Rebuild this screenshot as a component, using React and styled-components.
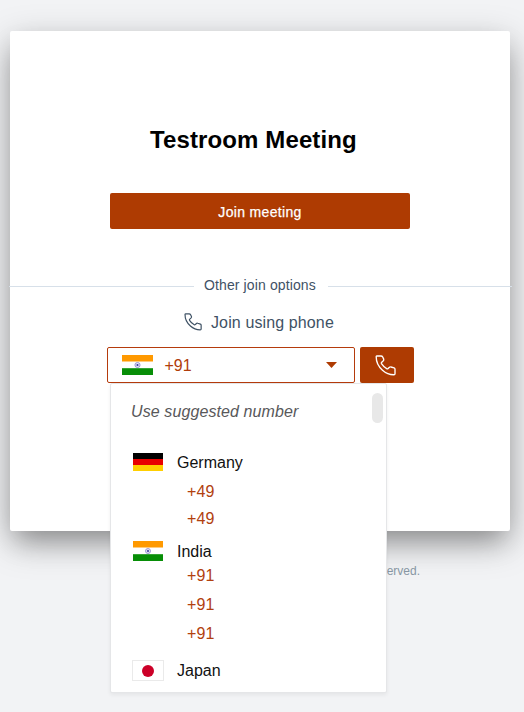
import React from "react";
import styled, { createGlobalStyle } from "styled-components";

const GlobalStyle = createGlobalStyle`
  * { box-sizing: border-box; }
  body {
    margin: 0;
    background: #f2f3f5;
    font-family: "Liberation Sans", Arial, Helvetica, sans-serif;
    overflow: hidden;
  }
`;

const Page = styled.main`
  width: 524px;
  height: 712px;
  padding: 31px 0 0 10px;
  overflow: hidden;
`;

const Card = styled.section`
  display: flex;
  flex-direction: column;
  align-items: flex-start;
  width: 500px;
  height: 500px;
  padding-top: 92px;
  background: #fff;
  border-radius: 2px;
  box-shadow: 0 11px 36px rgba(0, 0, 0, 0.25), 0 14px 26px -6px rgba(0, 0, 0, 0.28);
`;

const Title = styled.h1`
  margin: 0 0 0 140px;
  height: 34px;
  color: #000;
  font-size: 24px;
  font-weight: 700;
  line-height: 34px;
  letter-spacing: 0.12px;
  white-space: nowrap;
`;

const JoinButton = styled.button`
  width: 300px;
  height: 36px;
  margin: 36px 0 0 100px;
  padding: 1px 0 0;
  border: 0;
  border-radius: 2px;
  background: #ae3b02;
  color: #fff;
  font: 14px "Liberation Sans", Arial, sans-serif;
  letter-spacing: 0.33px;
  -webkit-text-stroke: 0.25px #fff;
`;

const Divider = styled.div`
  display: flex;
  align-items: center;
  width: 503px;
  height: 20px;
  margin: 46px 0 0 -1px;
  gap: 10px;
  color: #3f5265;
  font-size: 14px;
  letter-spacing: 0.12px;
  white-space: nowrap;
`;

const Rule = styled.span`
  flex: none;
  width: ${(p) => p.$width}px;
  height: 1px;
  margin-top: 2px;
  background: #d7e0e9;
`;

const DividerLabel = styled.span`
  flex: none;
  width: 114px;
`;

const PhoneHeading = styled.h2`
  display: flex;
  align-items: center;
  gap: 9px;
  height: 24px;
  margin: 16px 0 0 174px;
  color: #3f5265;
  font-size: 16px;
  font-weight: 400;
  letter-spacing: 0.12px;
  white-space: nowrap;
  svg { margin-top: -2px; }
`;

const DialRow = styled.div`
  position: relative;
  display: flex;
  gap: 4.5px;
  margin: 12px 0 0 97px;
`;

const Select = styled.button`
  display: flex;
  align-items: center;
  width: 248px;
  height: 36px;
  padding: 0 17px 0 14px;
  border: 1px solid #b53b0c;
  border-radius: 2px;
  background: #fff;
  color: #b03c0b;
  font: 16px "Liberation Sans", Arial, sans-serif;
`;

const SelectValue = styled.span`
  flex: 1;
  margin-left: 11.5px;
  padding-top: 1px;
  text-align: left;
`;

const CallButton = styled.button`
  display: grid;
  place-items: center;
  width: 54px;
  height: 36px;
  padding: 0 3px 0 0;
  border: 0;
  border-radius: 2px;
  background: #ae3b02;
  color: #fff;
`;

const Menu = styled.div`
  position: absolute;
  top: 36px;
  left: 3px;
  z-index: 2;
  width: 277px;
  height: 310px;
  padding: 16px 0 0 21px;
  border: 1px solid #e5e6e8;
  border-radius: 2px;
  background: #fff;
  box-shadow: 0 2px 4px rgba(0, 0, 0, 0.06);
`;

const Suggestion = styled.div`
  height: 24px;
  margin: 0 0 28px -1px;
  color: #58585a;
  font-size: 16px;
  font-style: italic;
  line-height: 24px;
  letter-spacing: 0.1px;
`;

const Country = styled.div`
  display: flex;
  align-items: center;
  height: 22px;
  margin-top: ${(p) => p.$gap || 0}px;
  color: #111;
  font-size: 16px;
`;

const FlagSlot = styled.span`
  display: flex;
  justify-content: center;
  width: 32px;
  margin: -2px 13px 0 0;
`;

const Dial = styled.div`
  height: 20px;
  margin: ${(p) => p.$gap}px 0 0 55px;
  color: #b2410f;
  font-size: 16px;
  line-height: 20px;
  letter-spacing: 0.1px;
`;

const ScrollThumb = styled.div`
  position: absolute;
  top: 9px;
  right: 3px;
  width: 11px;
  height: 30px;
  border-radius: 6px;
  background: #e8e8e8;
`;

const Footer = styled.footer`
  width: 410px;
  margin-top: 33px;
  color: #8796a3;
  font-size: 12px;
  line-height: 14px;
  text-align: right;
`;

const PhoneIcon = ({ size, weight }) => (
  <svg width={size} height={size} viewBox="0 0 21 21" fill="none" stroke="currentColor" strokeWidth={weight} strokeLinejoin="round">
    <path d="M1.2 1.7Q1.3 1 2 1H6Q7.2 1 7.7 2L8.7 4.1Q9 5 8.3 5.7L6.5 7.4Q6.1 7.9 6.5 8.6Q8.6 12 12 13.8Q12.6 14.1 13.1 13.6L14.5 12.2Q15.1 11.6 16 12L19.1 12.9Q20 13.2 20 14.2V18.7Q20 19.7 19 19.7Q12.6 19.8 7.5 15.2Q1.1 9.4 1.2 1.7Z" />
  </svg>
);

const IndiaFlag = ({ width = 30 }) => (
  <svg width={width} height="20" viewBox="0 0 30 20" preserveAspectRatio="none">
    <rect width="30" height="20" fill="#fff" />
    <rect width="30" height="6.5" fill="#ff9900" />
    <rect y="13.2" width="30" height="6.8" fill="#078e07" />
    <circle cx="15" cy="10" r="2.5" fill="#e5e4f6" stroke="#8a85cd" strokeWidth=".8" />
    <circle cx="15" cy="10" r="1" fill="#37339c" />
  </svg>
);

const GermanyFlag = () => (
  <svg width="30" height="18" viewBox="0 0 30 18">
    <rect width="30" height="6" fill="#000" />
    <rect y="6" width="30" height="6" fill="#e80000" />
    <rect y="12" width="30" height="6" fill="#ffcf00" />
  </svg>
);

const JapanFlag = () => (
  <svg width="32" height="22" viewBox="0 0 32 22">
    <rect x=".5" y="1.5" width="31" height="20" fill="#fff" stroke="#eaeaea" />
    <circle cx="16" cy="12" r="6" fill="#cc0028" />
  </svg>
);

export default function App() {
  return (
    <Page>
      <GlobalStyle />
      <Card>
        <Title>Testroom Meeting</Title>
        <JoinButton>Join meeting</JoinButton>
        <Divider>
          <Rule $width={185} />
          <DividerLabel>Other join options</DividerLabel>
          <Rule $width={184} />
        </Divider>
        <PhoneHeading>
          <PhoneIcon size={18} weight={1.4} />
          Join using phone
        </PhoneHeading>
        <DialRow>
          <Select>
            <IndiaFlag width={31} />
            <SelectValue>+91</SelectValue>
            <svg width="11" height="6" viewBox="0 0 11 6">
              <path d="M0 0H11L5.5 6Z" fill="#ae3b02" />
            </svg>
          </Select>
          <CallButton aria-label="Call">
            <PhoneIcon size={21} weight={1.35} />
          </CallButton>
          <Menu>
            <Suggestion>Use suggested number</Suggestion>
            <Country><FlagSlot><GermanyFlag /></FlagSlot>Germany</Country>
            <Dial $gap={8}>+49</Dial>
            <Dial $gap={7}>+49</Dial>
            <Country $gap={12}><FlagSlot><IndiaFlag /></FlagSlot>India</Country>
            <Dial $gap={3}>+91</Dial>
            <Dial $gap={9}>+91</Dial>
            <Dial $gap={9}>+91</Dial>
            <Country $gap={16}><FlagSlot><JapanFlag /></FlagSlot>Japan</Country>
            <ScrollThumb />
          </Menu>
        </DialRow>
      </Card>
      <Footer>All rights reserved.</Footer>
    </Page>
  );
}
